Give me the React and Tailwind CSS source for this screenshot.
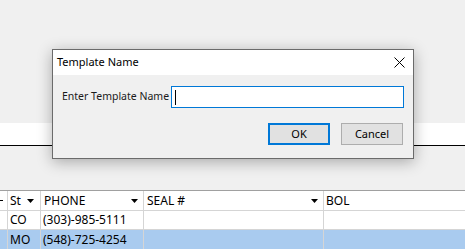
import React from "react";

const Arrow = () => (
  <svg width="7" height="4" viewBox="0 0 7 4" className="shrink-0">
    <path d="M0 0H7L3.5 4Z" fill="#000" />
  </svg>
);

export default function App() {
  return (
    <div
      className="relative w-[465px] h-[249px] overflow-hidden bg-[#f0f0f0] text-[12px] text-black"
      style={{ fontFamily: '"Noto Sans", "Liberation Sans", sans-serif' }}
    >
      <div className="flex flex-col">
        <div className="h-[123px]" />
        <div className="h-[22px] bg-white" />
        <div className="h-px bg-black" />
        <div className="h-[44px]" />
        <div className="h-px bg-[#a0a0a0]" />
        {/* header */}
        <div className="flex h-[20px] bg-white border-b border-[#d5d5d5] leading-[19px]">
          <div className="w-[8px] border-r border-[#d5d5d5] overflow-hidden flex items-center justify-end">
            <div className="w-[3px] h-px bg-black mr-[4px]" />
          </div>
          <div className="w-[33px] border-r border-[#d5d5d5] flex items-center pl-[2px] pr-[6px] justify-between">
            <span>St</span>
            <Arrow />
          </div>
          <div className="w-[103px] border-r border-[#d5d5d5] flex items-center pl-[3px] pr-[5px] justify-between">
            <span>PHONE</span>
            <Arrow />
          </div>
          <div className="w-[180px] border-r border-[#d5d5d5] flex items-center pl-[3px] pr-[5px] justify-between">
            <span>SEAL #</span>
            <Arrow />
          </div>
          <div className="flex-1 flex items-center pl-[2px]">
            <span>BOL</span>
          </div>
        </div>
        <div className="flex h-[19px] bg-white border-b border-[#d5d5d5] leading-[18px]">
          <div className="w-[8px] border-r border-[#d5d5d5]" />
          <div className="w-[33px] border-r border-[#d5d5d5] pl-[2px]">CO</div>
          <div className="w-[103px] border-r border-[#d5d5d5] pl-[2px]">(303)-985-5111</div>
          <div className="w-[180px] border-r border-[#d5d5d5]" />
          <div className="flex-1" />
        </div>
        <div className="flex h-[20px] bg-[#a9cbef] leading-[19px]">
          <div className="w-[8px] border-r border-[#d5d5d5]" />
          <div className="w-[33px] border-r border-[#d5d5d5] pl-[2px]">MO</div>
          <div className="w-[103px] border-r border-[#d5d5d5] pl-[2px]">(548)-725-4254</div>
          <div className="w-[180px] border-r border-[#d5d5d5]" />
          <div className="flex-1" />
        </div>
      </div>

      {/* dialog */}
      <div className="absolute left-[52px] top-[49px] w-[362px] h-[110px] border border-[#6b6b6b] bg-[#f0f0f0] shadow-[0_3px_14px_rgba(0,0,0,0.3)] flex flex-col text-[11px]">
        <div className="h-[25px] bg-white flex items-center justify-between pl-[4px] pr-[8px]">
          <span className="whitespace-nowrap">Template Name</span>
          <svg width="11" height="11" viewBox="0 0 11 11">
            <path d="M0.5 0.5L10.5 10.5M10.5 0.5L0.5 10.5" stroke="#000" strokeWidth="1" />
          </svg>
        </div>
        <div className="flex flex-col pt-[11px] px-[9px]">
          <div className="flex items-center justify-between">
            <span className="w-[109px] shrink-0 whitespace-nowrap text-[10.5px] text-[#1a1a1a]">Enter Template Name</span>
            <div className="shrink-0 w-[233px] h-[22px] bg-white border border-[#0078d7] flex items-center pl-[3px]">
              <div className="w-px h-[15px] bg-black" />
            </div>
          </div>
          <div className="flex justify-end gap-[11px] mt-[15px] pr-[1px]">
            <div className="w-[62px] h-[22px] bg-[#e1e1e1] border-2 border-[#0078d7] flex items-center justify-center">
              OK
            </div>
            <div className="w-[62px] h-[22px] bg-[#e1e1e1] border border-[#adadad] flex items-center justify-center">
              Cancel
            </div>
          </div>
        </div>
      </div>
    </div>
  );
}
